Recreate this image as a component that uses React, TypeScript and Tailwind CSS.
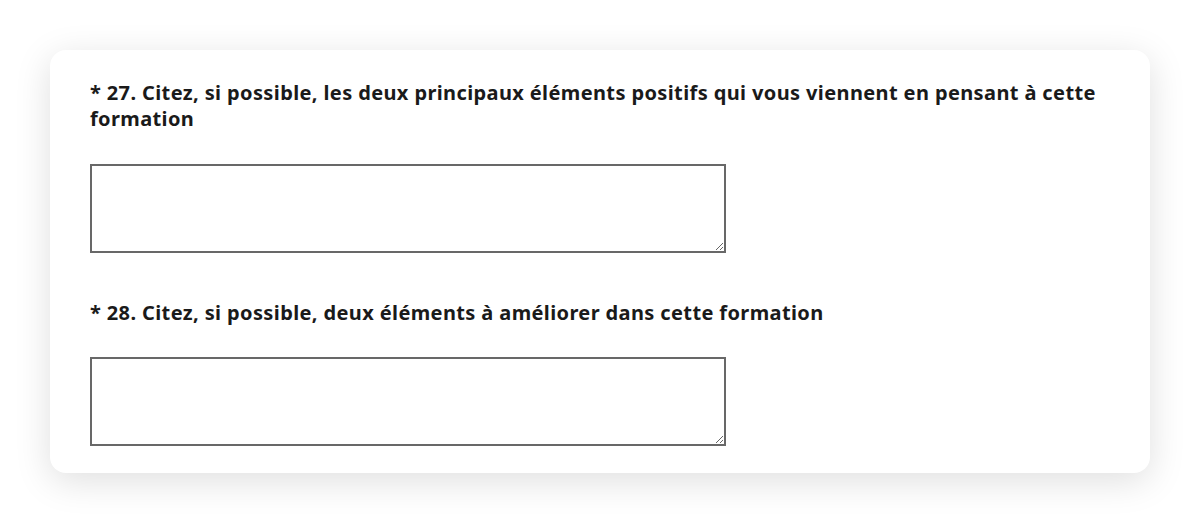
export default function App() {
  return (
    <div className="w-[1200px] h-[524px] bg-white pt-[50px] px-[50px]" style={{ fontFamily: '"Noto Sans", Roboto, sans-serif' }}>
      <div className="w-[1100px] bg-white rounded-[16px] shadow-[0_8px_36px_rgba(0,0,0,0.13)] pt-[30px] pb-[27px] px-[40px]">
        <h2 className="text-[20px] leading-[26px] font-bold text-[#1a1a1a] tracking-[0.38px]">
          * 27. Citez, si possible, les deux principaux éléments positifs qui vous viennent en pensant à cette formation
        </h2>
        <textarea className="block mt-[32px] w-[636px] h-[89px] border-2 border-[#686868] bg-white resize-y outline-none" />
        <h2 className="mt-[47px] text-[20px] leading-[26px] font-bold text-[#1a1a1a] tracking-[0.38px]">
          * 28. Citez, si possible, deux éléments à améliorer dans cette formation
        </h2>
        <textarea className="block mt-[31px] w-[636px] h-[89px] border-2 border-[#686868] bg-white resize-y outline-none" />
      </div>
    </div>
  );
}
